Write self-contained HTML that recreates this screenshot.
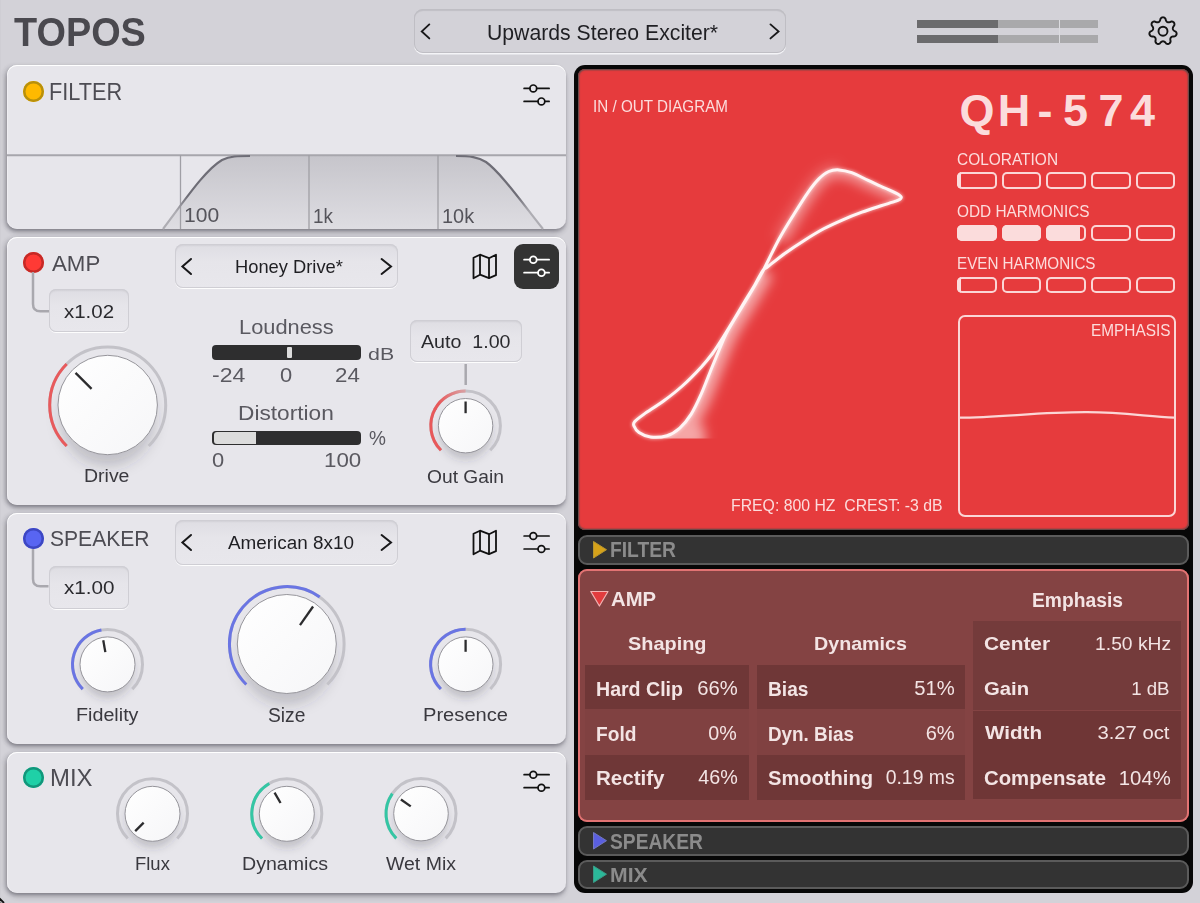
<!DOCTYPE html>
<html><head><meta charset='utf-8'><style>
*{margin:0;padding:0;box-sizing:border-box}
html,body{width:1200px;height:903px;overflow:hidden;background:#d3d2d8;font-family:"Liberation Sans",sans-serif}
.a{position:absolute}
.t{position:absolute;white-space:pre;line-height:1;font-family:"Liberation Sans",sans-serif}
.panel{position:absolute;left:7px;width:559px;background:#e7e6eb;border-radius:10px;
 box-shadow:inset 0 1px 0 #ffffff, inset 1px 0 0 #efeef2, 0 2px 3px rgba(40,38,50,0.22), 0 5px 4px rgba(40,38,50,0.16), -3px 1px 4px rgba(40,38,50,0.2)}
.dot{position:absolute;width:21px;height:21px;border-radius:50%}
.ibox{position:absolute;border-radius:7px;background:linear-gradient(#dedde3,#e6e5ea 40%,#e8e7ec);
 box-shadow:inset 0 0 0 1px #cfced4, inset 0 2px 2px rgba(0,0,0,0.06), 0 1px 0 rgba(255,255,255,0.9)}
.tab{position:absolute;left:578px;width:611px;background:#333333;border:2px solid #5b5b5b;border-radius:9px}
</style></head>
<body>
<div class='a' style='left:0;top:0;width:1px;height:903px;background:#cfced4'></div><svg class='a' style='left:0;top:893px' width='12' height='10'><path d='M-0.5,5.5 L4,10' stroke='#111' stroke-width='1.8'/><path d='M0,8 L2,10 L0,10Z' fill='#888'/></svg><div class='a' style='left:414px;top:9px;width:372px;height:44px;border-radius:9px;background:#d3d2d8;box-shadow:inset 0 0 0 1px #bfbec4, inset 0 2px 1px rgba(0,0,0,0.09), 0 1.5px 0 #f4f4f7'></div><div class='a' style='left:917px;top:20px;width:81px;height:8px;background:#6b6b6d'></div><div class='a' style='left:998px;top:20px;width:61px;height:8px;background:#a9a9ab'></div><div class='a' style='left:1060px;top:20px;width:38px;height:8px;background:#a9a9ab'></div><div class='a' style='left:917px;top:35px;width:81px;height:8px;background:#6b6b6d'></div><div class='a' style='left:998px;top:35px;width:61px;height:8px;background:#a9a9ab'></div><div class='a' style='left:1060px;top:35px;width:38px;height:8px;background:#a9a9ab'></div><div class='panel' style='top:65px;height:164px'></div><div class='panel' style='top:237px;height:268px'></div><div class='panel' style='top:513px;height:231px'></div><div class='panel' style='top:752px;height:141px'></div><div class='dot' style='left:22.5px;top:80.5px;background:#ffb900;box-shadow:inset 0 0 0 2.5px #b8900c'></div><div class='dot' style='left:22.5px;top:251.5px;background:#ff3a35;box-shadow:inset 0 0 0 2.5px #c52a26'></div><div class='dot' style='left:22.5px;top:528.0px;background:#5865f2;box-shadow:inset 0 0 0 2.5px #3d47c2'></div><div class='dot' style='left:22.5px;top:766.5px;background:#1fd0a7;box-shadow:inset 0 0 0 2.5px #13967b'></div><div class='ibox' style='left:49px;top:289px;width:80px;height:43px'></div><div class='ibox' style='left:48.5px;top:565.5px;width:80.5px;height:43px'></div><div class='ibox' style='left:410px;top:319.5px;width:111.5px;height:42.5px'></div><div class='ibox' style='left:175px;top:244px;width:223px;height:44px;border-radius:8px'></div><div class='ibox' style='left:175px;top:520px;width:223px;height:44.5px;border-radius:8px'></div><div class='a' style='left:514px;top:244px;width:45px;height:44.5px;border-radius:9px;background:#333333'></div><div class='a' style='left:212px;top:345px;width:149px;height:14.5px;border-radius:4px;background:#2e2e2f'></div><div class='a' style='left:286.7px;top:347px;width:5.8px;height:10.5px;border-radius:1px;background:#dcdcdc'></div><div class='a' style='left:212px;top:430.5px;width:149px;height:14.5px;border-radius:4px;background:#2e2e2f'></div><div class='a' style='left:213.5px;top:432px;width:42px;height:11.5px;border-radius:3px 0 0 3px;background:#dcdcdc'></div><div class='a' style='left:574px;top:65px;width:619px;height:828px;border-radius:11px;background:#070707'></div><div class='a' style='left:578px;top:69px;width:611px;height:461px;border-radius:7px;background:#e63b3d;box-shadow:inset 0 0 0 1px #6e4848, inset 0 0 1px 2px rgba(120,70,70,0.45)'></div><div class='a' style='left:957.0px;top:172.2px;width:39.6px;height:16.6px;border-radius:5px;box-shadow:inset 0 0 0 2px #fbd6d6;overflow:hidden'><div style='position:absolute;left:0;top:0;bottom:0;width:10%;background:#fbdcdc'></div></div><div class='a' style='left:1001.7px;top:172.2px;width:39.6px;height:16.6px;border-radius:5px;box-shadow:inset 0 0 0 2px #fbd6d6;overflow:hidden'></div><div class='a' style='left:1046.4px;top:172.2px;width:39.6px;height:16.6px;border-radius:5px;box-shadow:inset 0 0 0 2px #fbd6d6;overflow:hidden'></div><div class='a' style='left:1091.1px;top:172.2px;width:39.6px;height:16.6px;border-radius:5px;box-shadow:inset 0 0 0 2px #fbd6d6;overflow:hidden'></div><div class='a' style='left:1135.8px;top:172.2px;width:39.6px;height:16.6px;border-radius:5px;box-shadow:inset 0 0 0 2px #fbd6d6;overflow:hidden'></div><div class='a' style='left:957.0px;top:224.5px;width:39.6px;height:16.6px;border-radius:5px;box-shadow:inset 0 0 0 2px #fbd6d6;overflow:hidden'><div style='position:absolute;left:0;top:0;bottom:0;width:100%;background:#fbdcdc'></div></div><div class='a' style='left:1001.7px;top:224.5px;width:39.6px;height:16.6px;border-radius:5px;box-shadow:inset 0 0 0 2px #fbd6d6;overflow:hidden'><div style='position:absolute;left:0;top:0;bottom:0;width:100%;background:#fbdcdc'></div></div><div class='a' style='left:1046.4px;top:224.5px;width:39.6px;height:16.6px;border-radius:5px;box-shadow:inset 0 0 0 2px #fbd6d6;overflow:hidden'><div style='position:absolute;left:0;top:0;bottom:0;width:86%;background:#fbdcdc'></div></div><div class='a' style='left:1091.1px;top:224.5px;width:39.6px;height:16.6px;border-radius:5px;box-shadow:inset 0 0 0 2px #fbd6d6;overflow:hidden'></div><div class='a' style='left:1135.8px;top:224.5px;width:39.6px;height:16.6px;border-radius:5px;box-shadow:inset 0 0 0 2px #fbd6d6;overflow:hidden'></div><div class='a' style='left:957.0px;top:276.9px;width:39.6px;height:16.6px;border-radius:5px;box-shadow:inset 0 0 0 2px #fbd6d6;overflow:hidden'><div style='position:absolute;left:0;top:0;bottom:0;width:10%;background:#fbdcdc'></div></div><div class='a' style='left:1001.7px;top:276.9px;width:39.6px;height:16.6px;border-radius:5px;box-shadow:inset 0 0 0 2px #fbd6d6;overflow:hidden'></div><div class='a' style='left:1046.4px;top:276.9px;width:39.6px;height:16.6px;border-radius:5px;box-shadow:inset 0 0 0 2px #fbd6d6;overflow:hidden'></div><div class='a' style='left:1091.1px;top:276.9px;width:39.6px;height:16.6px;border-radius:5px;box-shadow:inset 0 0 0 2px #fbd6d6;overflow:hidden'></div><div class='a' style='left:1135.8px;top:276.9px;width:39.6px;height:16.6px;border-radius:5px;box-shadow:inset 0 0 0 2px #fbd6d6;overflow:hidden'></div><div class='a' style='left:957.5px;top:314.5px;width:218px;height:202.5px;border-radius:7px;border:2px solid #fbd6d6'></div><div class='tab' style='top:535px;height:30px'></div><div class='a' style='left:578px;top:569px;width:611px;height:253px;border-radius:9px;background:#844343;box-shadow:inset 0 0 0 2px #e27373'></div><div class='tab' style='top:826px;height:30px'></div><div class='tab' style='top:859.5px;height:29.5px'></div><div class='a' style='left:585.4px;top:665.2px;width:163.4px;height:44.2px;background:#6f3737'></div><div class='a' style='left:585.4px;top:755px;width:163.4px;height:44.8px;background:#6f3737'></div><div class='a' style='left:757.4px;top:665.2px;width:207.6px;height:44.2px;background:#6f3737'></div><div class='a' style='left:757.4px;top:755px;width:207.6px;height:44.8px;background:#6f3737'></div><div class='a' style='left:585.4px;top:709.4px;width:163.4px;height:45.6px;background:#804141'></div><div class='a' style='left:757.4px;top:709.4px;width:207.6px;height:45.6px;background:#804141'></div><div class='a' style='left:973.2px;top:621.3px;width:208.2px;height:89.2px;background:#743b3b'></div><div class='a' style='left:973.2px;top:710.5px;width:208.2px;height:88.5px;background:#6f3636'></div>
<svg class='a' style='left:0;top:0' width='1200' height='903' viewBox='0 0 1200 903'><defs>
<filter id='blurL' x='-50%' y='-50%' width='200%' height='200%'><feGaussianBlur stdDeviation='7'/></filter>
<filter id='blurS' x='-50%' y='-50%' width='200%' height='200%'><feGaussianBlur stdDeviation='4.5'/></filter>
<filter id='glow' filterUnits='userSpaceOnUse' x='578' y='69' width='611' height='460'><feGaussianBlur stdDeviation='6'/></filter><filter id='glowS' filterUnits='userSpaceOnUse' x='578' y='69' width='611' height='460'><feGaussianBlur stdDeviation='1.5'/></filter>
<linearGradient id='kb' x1='0' y1='0' x2='1' y2='1'><stop offset='0' stop-color='#ffffff'/><stop offset='1' stop-color='#f6f6f8'/></linearGradient>
<linearGradient id='og' gradientUnits='userSpaceOnUse' x1='440' y1='405' x2='466' y2='390'><stop offset='0' stop-color='#e8585a'/><stop offset='1' stop-color='#d9a3a6'/></linearGradient>
<linearGradient id='fg' x1='0' y1='0' x2='0' y2='1'><stop offset='0' stop-color='#c6c5cb'/><stop offset='1' stop-color='#dedde2'/></linearGradient><linearGradient id='fs' gradientUnits='userSpaceOnUse' x1='0' y1='196' x2='0' y2='212'><stop offset='0' stop-color='#6e6d76'/><stop offset='1' stop-color='#aeadb3'/></linearGradient>
</defs>
<path d='M429.3,24.4 L421.8,31.4 L429.3,38.4' fill='none' stroke='#18181a' stroke-width='1.9' stroke-linecap='round' stroke-linejoin='miter'/>
<path d='M770.5,24.4 L778.5,31.4 L770.5,38.4' fill='none' stroke='#18181a' stroke-width='1.9' stroke-linecap='round' stroke-linejoin='miter'/>
<path d='M1163.00,17.30 L1163.42,17.33 L1163.82,17.43 L1164.22,17.60 L1164.61,17.83 L1164.97,18.14 L1165.30,18.52 L1165.59,19.03 L1165.74,19.97 L1165.96,20.49 L1166.18,20.89 L1166.41,21.23 L1166.63,21.52 L1166.87,21.75 L1167.12,21.95 L1167.38,22.10 L1167.66,22.21 L1167.97,22.28 L1168.31,22.32 L1168.67,22.32 L1169.08,22.29 L1169.53,22.21 L1170.07,22.05 L1170.90,21.59 L1171.48,21.50 L1171.99,21.52 L1172.45,21.61 L1172.87,21.76 L1173.25,21.97 L1173.58,22.23 L1173.87,22.53 L1174.10,22.88 L1174.28,23.26 L1174.40,23.68 L1174.45,24.12 L1174.44,24.59 L1174.35,25.09 L1174.12,25.64 L1173.49,26.34 L1173.22,26.83 L1173.04,27.26 L1172.92,27.65 L1172.84,28.00 L1172.80,28.34 L1172.80,28.65 L1172.85,28.95 L1172.94,29.24 L1173.07,29.53 L1173.25,29.81 L1173.48,30.10 L1173.76,30.39 L1174.10,30.70 L1174.56,31.03 L1175.44,31.39 L1175.87,31.78 L1176.17,32.19 L1176.39,32.61 L1176.53,33.03 L1176.61,33.46 L1176.61,33.88 L1176.55,34.29 L1176.43,34.69 L1176.24,35.07 L1175.99,35.42 L1175.67,35.74 L1175.30,36.03 L1174.85,36.26 L1174.29,36.43 L1173.34,36.37 L1172.79,36.47 L1172.34,36.59 L1171.96,36.74 L1171.63,36.90 L1171.35,37.08 L1171.10,37.27 L1170.90,37.50 L1170.73,37.75 L1170.59,38.03 L1170.48,38.35 L1170.39,38.71 L1170.34,39.11 L1170.31,39.57 L1170.34,40.13 L1170.61,41.04 L1170.57,41.62 L1170.44,42.12 L1170.25,42.55 L1170.00,42.92 L1169.72,43.25 L1169.39,43.51 L1169.03,43.72 L1168.64,43.87 L1168.23,43.96 L1167.80,43.98 L1167.35,43.94 L1166.89,43.82 L1166.43,43.62 L1165.95,43.28 L1165.40,42.51 L1164.98,42.14 L1164.61,41.87 L1164.26,41.66 L1163.93,41.50 L1163.61,41.39 L1163.30,41.32 L1163.00,41.30 L1162.70,41.32 L1162.39,41.39 L1162.07,41.50 L1161.74,41.66 L1161.39,41.87 L1161.02,42.14 L1160.60,42.51 L1160.05,43.28 L1159.57,43.62 L1159.11,43.82 L1158.65,43.94 L1158.20,43.98 L1157.77,43.96 L1157.36,43.87 L1156.97,43.72 L1156.61,43.51 L1156.28,43.25 L1156.00,42.92 L1155.75,42.55 L1155.56,42.12 L1155.43,41.62 L1155.39,41.04 L1155.66,40.13 L1155.69,39.57 L1155.66,39.11 L1155.61,38.71 L1155.52,38.35 L1155.41,38.03 L1155.27,37.75 L1155.10,37.50 L1154.90,37.27 L1154.65,37.08 L1154.37,36.90 L1154.04,36.74 L1153.66,36.59 L1153.21,36.47 L1152.66,36.37 L1151.71,36.43 L1151.15,36.26 L1150.70,36.03 L1150.33,35.74 L1150.01,35.42 L1149.76,35.07 L1149.57,34.69 L1149.45,34.29 L1149.39,33.88 L1149.39,33.46 L1149.47,33.03 L1149.61,32.61 L1149.83,32.19 L1150.13,31.78 L1150.56,31.39 L1151.44,31.03 L1151.90,30.70 L1152.24,30.39 L1152.52,30.10 L1152.75,29.81 L1152.93,29.53 L1153.06,29.24 L1153.15,28.95 L1153.20,28.65 L1153.20,28.34 L1153.16,28.00 L1153.08,27.65 L1152.96,27.26 L1152.78,26.83 L1152.51,26.34 L1151.88,25.64 L1151.65,25.09 L1151.56,24.59 L1151.55,24.12 L1151.60,23.68 L1151.72,23.26 L1151.90,22.88 L1152.13,22.53 L1152.42,22.23 L1152.75,21.97 L1153.13,21.76 L1153.55,21.61 L1154.01,21.52 L1154.52,21.50 L1155.10,21.59 L1155.93,22.05 L1156.47,22.21 L1156.92,22.29 L1157.33,22.32 L1157.69,22.32 L1158.03,22.28 L1158.34,22.21 L1158.62,22.10 L1158.88,21.95 L1159.13,21.75 L1159.37,21.52 L1159.59,21.23 L1159.82,20.89 L1160.04,20.49 L1160.26,19.97 L1160.41,19.03 L1160.70,18.52 L1161.03,18.14 L1161.39,17.83 L1161.78,17.60 L1162.18,17.43 L1162.58,17.33 Z' fill='none' stroke='#141414' stroke-width='1.9' stroke-linejoin='round'/><circle cx='1163' cy='31.2' r='4.5' fill='none' stroke='#141414' stroke-width='1.9'/>
<line x1='1059.5' y1='20' x2='1059.5' y2='43' stroke='#dcdce0' stroke-width='1'/>
<path d='M163,229 C185,200 205,170 222,160 C230,156 238,156 250,156 L456,156 C470,156 478,157 486,162 C500,172 520,200 543,229 Z' fill='url(#fg)'/>
<line x1='7' y1='155.3' x2='566' y2='155.3' stroke='#a7a6ac' stroke-width='2'/>
<line x1='180.5' y1='155' x2='180.5' y2='229' stroke='#a09fa5' stroke-width='1.3'/>
<line x1='309' y1='155' x2='309' y2='229' stroke='#a09fa5' stroke-width='1.3'/>
<line x1='438' y1='155' x2='438' y2='229' stroke='#a09fa5' stroke-width='1.3'/>
<path d='M163,229 C185,200 205,170 222,160 C230,156 238,156 250,156' fill='none' stroke='url(#fs)' stroke-width='2.2'/>
<path d='M456,156 C470,156 478,157 486,162 C500,172 520,200 543,229' fill='none' stroke='url(#fs)' stroke-width='2.2'/>
<path d='M33,272 V304 Q33,311.3 40.3,311.3 H49' fill='none' stroke='#a9a8ae' stroke-width='2.5'/>
<path d='M33,549 V579 Q33,586.3 40.3,586.3 H48.5' fill='none' stroke='#a9a8ae' stroke-width='2.5'/>
<line x1='465.7' y1='364' x2='465.7' y2='385' stroke='#a9a8ae' stroke-width='2.5'/>
<g stroke='#111' stroke-width='1.7' fill='none' stroke-linecap='round'><line x1='524.1' y1='88.4' x2='529.90' y2='88.4'/><circle cx='533.30' cy='88.4' r='3.4'/><line x1='536.70' y1='88.4' x2='549.1' y2='88.4'/><line x1='524.1' y1='101.4' x2='538.00' y2='101.4'/><circle cx='541.40' cy='101.4' r='3.4'/><line x1='544.80' y1='101.4' x2='549.1' y2='101.4'/></g>
<g stroke='#111' stroke-width='1.8' fill='none' stroke-linejoin='round'><path d='M473.5,257.7 L480.0,254.7 L489.0,258.2 L496.0,254.7 L496.0,275.2 L489.0,278.2 L480.0,274.7 L473.5,278.2 Z'/><line x1='480.0' y1='254.7' x2='480.0' y2='274.7'/><line x1='489.0' y1='258.2' x2='489.0' y2='278.2'/></g>
<g stroke='#ffffff' stroke-width='1.8' fill='none' stroke-linecap='round'><line x1='524.1' y1='259.7' x2='529.90' y2='259.7'/><circle cx='533.30' cy='259.7' r='3.4'/><line x1='536.70' y1='259.7' x2='549.1' y2='259.7'/><line x1='524.1' y1='272.7' x2='538.00' y2='272.7'/><circle cx='541.40' cy='272.7' r='3.4'/><line x1='544.80' y1='272.7' x2='549.1' y2='272.7'/></g>
<path d='M191,259.0 L182.4,266.5 L191,274.0' fill='none' stroke='#18181a' stroke-width='2.0' stroke-linecap='round' stroke-linejoin='miter'/>
<path d='M381.6,259.0 L391,266.5 L381.6,274.0' fill='none' stroke='#18181a' stroke-width='2.0' stroke-linecap='round' stroke-linejoin='miter'/>
<g stroke='#111' stroke-width='1.8' fill='none' stroke-linejoin='round'><path d='M473.5,533.7 L480.0,530.7 L489.0,534.2 L496.0,530.7 L496.0,551.2 L489.0,554.2 L480.0,550.7 L473.5,554.2 Z'/><line x1='480.0' y1='530.7' x2='480.0' y2='550.7'/><line x1='489.0' y1='534.2' x2='489.0' y2='554.2'/></g>
<g stroke='#111' stroke-width='1.7' fill='none' stroke-linecap='round'><line x1='524.1' y1='536' x2='529.90' y2='536'/><circle cx='533.30' cy='536' r='3.4'/><line x1='536.70' y1='536' x2='549.1' y2='536'/><line x1='524.1' y1='549' x2='538.00' y2='549'/><circle cx='541.40' cy='549' r='3.4'/><line x1='544.80' y1='549' x2='549.1' y2='549'/></g>
<path d='M191,535.0 L182.4,542.5 L191,550.0' fill='none' stroke='#18181a' stroke-width='2.0' stroke-linecap='round' stroke-linejoin='miter'/>
<path d='M381.6,535.0 L391,542.5 L381.6,550.0' fill='none' stroke='#18181a' stroke-width='2.0' stroke-linecap='round' stroke-linejoin='miter'/>
<g stroke='#111' stroke-width='1.7' fill='none' stroke-linecap='round'><line x1='524.1' y1='774.7' x2='529.90' y2='774.7'/><circle cx='533.30' cy='774.7' r='3.4'/><line x1='536.70' y1='774.7' x2='549.1' y2='774.7'/><line x1='524.1' y1='787.7' x2='538.00' y2='787.7'/><circle cx='541.40' cy='787.7' r='3.4'/><line x1='544.80' y1='787.7' x2='549.1' y2='787.7'/></g>
<ellipse cx='107.7' cy='418.92' rx='47.22' ry='47.22' fill='rgba(60,58,70,0.22)' filter='url(#blurL)'/>
<path d='M66.69,446.01 A58,58 0 1 1 148.71,446.01' fill='none' stroke='#c3c2c8' stroke-width='3.0'/>
<path d='M66.69,446.01 A58,58 0 0 1 66.69,363.99' fill='none' stroke='#e85a5c' stroke-width='3.0'/>
<circle cx='107.7' cy='405' r='49.7' fill='url(#kb)' stroke='#96959b' stroke-width='1'/>
<line x1='91.58' y1='388.88' x2='75.53' y2='372.83' stroke='#2c2c2e' stroke-width='2.3'/>
<ellipse cx='465.6' cy='433.32' rx='25.84' ry='25.84' fill='rgba(60,58,70,0.22)' filter='url(#blurS)'/>
<path d='M440.99,450.31 A34.8,34.8 0 1 1 490.21,450.31' fill='none' stroke='#c3c2c8' stroke-width='3.0'/>
<path d='M440.99,450.31 A34.8,34.8 0 0 1 435.46,408.30' fill='none' stroke='#e8585a' stroke-width='3.0'/>
<path d='M434.87,409.36 A34.8,34.8 0 0 1 465.60,390.90' fill='none' stroke='url(#og)' stroke-width='3.0'/>
<circle cx='465.6' cy='425.7' r='27.2' fill='url(#kb)' stroke='#96959b' stroke-width='1'/>
<line x1='465.60' y1='413.20' x2='465.60' y2='401.50' stroke='#2c2c2e' stroke-width='2.3'/>
<ellipse cx='107.5' cy='672.10' rx='26.12' ry='26.12' fill='rgba(60,58,70,0.22)' filter='url(#blurS)'/>
<path d='M82.75,689.15 A35,35 0 1 1 132.25,689.15' fill='none' stroke='#c3c2c8' stroke-width='3.0'/>
<path d='M82.75,689.15 A35,35 0 0 1 101.42,629.93' fill='none' stroke='#6a75e3' stroke-width='3.0'/>
<circle cx='107.5' cy='664.4' r='27.5' fill='url(#kb)' stroke='#96959b' stroke-width='1'/>
<line x1='105.33' y1='652.09' x2='103.25' y2='640.27' stroke='#2c2c2e' stroke-width='2.3'/>
<ellipse cx='286.8' cy='657.86' rx='47.02' ry='47.02' fill='rgba(60,58,70,0.22)' filter='url(#blurL)'/>
<path d='M246.28,684.52 A57.3,57.3 0 1 1 327.32,684.52' fill='none' stroke='#c3c2c8' stroke-width='3.0'/>
<path d='M246.28,684.52 A57.3,57.3 0 0 1 319.67,597.06' fill='none' stroke='#6a75e3' stroke-width='3.0'/>
<circle cx='286.8' cy='644' r='49.5' fill='url(#kb)' stroke='#96959b' stroke-width='1'/>
<line x1='299.99' y1='625.16' x2='313.07' y2='606.48' stroke='#2c2c2e' stroke-width='2.3'/>
<ellipse cx='465.6' cy='671.97' rx='26.03' ry='26.03' fill='rgba(60,58,70,0.22)' filter='url(#blurS)'/>
<path d='M440.85,689.05 A35,35 0 1 1 490.35,689.05' fill='none' stroke='#c3c2c8' stroke-width='3.0'/>
<path d='M440.85,689.05 A35,35 0 0 1 465.60,629.30' fill='none' stroke='#6a75e3' stroke-width='3.0'/>
<circle cx='465.6' cy='664.3' r='27.4' fill='url(#kb)' stroke='#96959b' stroke-width='1'/>
<line x1='465.60' y1='651.80' x2='465.60' y2='639.80' stroke='#2c2c2e' stroke-width='2.3'/>
<ellipse cx='152.5' cy='821.50' rx='26.12' ry='26.12' fill='rgba(60,58,70,0.22)' filter='url(#blurS)'/>
<path d='M127.75,838.55 A35,35 0 1 1 177.25,838.55' fill='none' stroke='#c3c2c8' stroke-width='3.0'/>
<circle cx='152.5' cy='813.8' r='27.5' fill='url(#kb)' stroke='#96959b' stroke-width='1'/>
<line x1='143.66' y1='822.64' x2='135.18' y2='831.12' stroke='#2c2c2e' stroke-width='2.3'/>
<ellipse cx='286.8' cy='821.50' rx='26.12' ry='26.12' fill='rgba(60,58,70,0.22)' filter='url(#blurS)'/>
<path d='M262.05,838.55 A35,35 0 1 1 311.55,838.55' fill='none' stroke='#c3c2c8' stroke-width='3.0'/>
<path d='M262.05,838.55 A35,35 0 0 1 269.30,783.49' fill='none' stroke='#34c6a4' stroke-width='3.0'/>
<circle cx='286.8' cy='813.8' r='27.5' fill='url(#kb)' stroke='#96959b' stroke-width='1'/>
<line x1='280.55' y1='802.97' x2='274.55' y2='792.58' stroke='#2c2c2e' stroke-width='2.3'/>
<ellipse cx='421' cy='821.24' rx='25.93' ry='25.93' fill='rgba(60,58,70,0.22)' filter='url(#blurS)'/>
<path d='M396.25,838.35 A35,35 0 1 1 445.75,838.35' fill='none' stroke='#c3c2c8' stroke-width='3.0'/>
<path d='M396.25,838.35 A35,35 0 0 1 392.33,793.52' fill='none' stroke='#34c6a4' stroke-width='3.0'/>
<circle cx='421' cy='813.6' r='27.3' fill='url(#kb)' stroke='#96959b' stroke-width='1'/>
<line x1='410.76' y1='806.43' x2='400.93' y2='799.55' stroke='#2c2c2e' stroke-width='2.3'/>
<clipPath id='c1'><polygon points='779.1,239.0 763.5,270.0 756.0,283.5 746.5,299.5 735.5,317.5 726.0,334.0 719.3,349.5 711.6,368.2 701.4,393.7 691.2,414.1 679.8,428.1 667.0,435.7 650.5,437.0 650.5,438.5 800.0,438.5 840.0,239.0'/></clipPath><clipPath id='c2'><polygon points='779.1,239.0 794.4,213.5 808.4,191.8 818.6,179.1 828.8,171.5 839.0,169.9 851.7,172.7 868.2,180.4 884.8,188.0 897.5,194.4 900.6,198.6 898.8,200.7 881.0,205.8 861.9,212.2 842.8,219.8 823.7,228.8 804.6,240.2 785.5,253.0 767.6,268.2 760.0,275.0'/></clipPath><clipPath id='c3'><polygon points='762.5,271.0 779.1,239.0 794.4,213.5 808.4,191.8 818.6,179.1 828.8,171.5 839.0,169.9 860.0,160.0 860.0,100.0 700.0,100.0 700.0,300.0'/></clipPath>
<g clip-path='url(#c1)'><path d='M763.50,270.00 C762.25,272.25 758.83,278.58 756.00,283.50 C753.17,288.42 749.92,293.83 746.50,299.50 C743.08,305.17 738.92,311.75 735.50,317.50 C732.08,323.25 728.70,328.67 726.00,334.00 C723.30,339.33 721.70,343.80 719.30,349.50 C716.90,355.20 714.58,360.83 711.60,368.20 C708.62,375.57 704.80,386.05 701.40,393.70 C698.00,401.35 694.80,408.37 691.20,414.10 C687.60,419.83 683.83,424.50 679.80,428.10 C675.77,431.70 671.88,434.22 667.00,435.70 C662.12,437.18 648.33,436.70 650.50,437.00 C652.67,437.30 670.92,437.67 680.00,437.50 C689.08,437.33 700.83,436.25 705.00,436.00 ' fill='none' stroke='rgba(255,236,236,0.6)' stroke-width='22' filter='url(#glow)'/></g>
<g clip-path='url(#c2)'><path d='M779.10,239.00 C781.65,234.75 789.52,221.37 794.40,213.50 C799.28,205.63 804.37,197.53 808.40,191.80 C812.43,186.07 815.20,182.48 818.60,179.10 C822.00,175.72 825.40,173.03 828.80,171.50 C832.20,169.97 835.18,169.70 839.00,169.90 C842.82,170.10 846.83,170.95 851.70,172.70 C856.57,174.45 862.68,177.85 868.20,180.40 C873.72,182.95 879.92,185.67 884.80,188.00 C889.68,190.33 894.87,192.63 897.50,194.40 C900.13,196.17 900.08,197.90 900.60,198.60 ' fill='none' stroke='rgba(255,236,236,0.5)' stroke-width='16' filter='url(#glow)'/></g>
<g clip-path='url(#c3)'><path d='M779.10,239.00 C781.65,234.75 789.52,221.37 794.40,213.50 C799.28,205.63 804.37,197.53 808.40,191.80 C812.43,186.07 815.20,182.48 818.60,179.10 C822.00,175.72 825.40,173.03 828.80,171.50 C832.20,169.97 837.30,170.17 839.00,169.90 ' fill='none' stroke='rgba(255,236,236,0.25)' stroke-width='12' filter='url(#glow)'/></g>
<path d='M634.60,421.70 C636.28,419.72 639.33,417.50 644.10,414.10 C648.87,410.70 656.83,405.98 663.20,401.30 C669.57,396.62 675.93,391.73 682.30,386.00 C688.67,380.27 696.37,372.32 701.40,366.90 C706.43,361.48 708.90,358.40 712.50,353.50 C716.10,348.60 719.42,343.17 723.00,337.50 C726.58,331.83 730.33,325.58 734.00,319.50 C737.67,313.42 741.58,306.67 745.00,301.00 C748.42,295.33 751.58,290.50 754.50,285.50 C757.42,280.50 760.25,274.17 762.50,271.00 C764.75,267.83 764.17,269.50 768.00,266.50 C771.83,263.50 779.40,257.38 785.50,253.00 C791.60,248.62 798.23,244.23 804.60,240.20 C810.97,236.17 817.33,232.20 823.70,228.80 C830.07,225.40 836.43,222.57 842.80,219.80 C849.17,217.03 855.53,214.53 861.90,212.20 C868.27,209.87 875.40,207.63 881.00,205.80 C886.60,203.97 892.23,202.40 895.50,201.20 C898.77,200.00 899.93,199.60 900.60,198.60 C901.27,197.60 902.13,196.97 899.50,195.20 C896.87,193.43 890.02,190.47 884.80,188.00 C879.58,185.53 873.72,182.95 868.20,180.40 C862.68,177.85 856.57,174.45 851.70,172.70 C846.83,170.95 842.82,170.10 839.00,169.90 C835.18,169.70 832.20,169.97 828.80,171.50 C825.40,173.03 822.00,175.72 818.60,179.10 C815.20,182.48 812.43,186.07 808.40,191.80 C804.37,197.53 799.28,205.63 794.40,213.50 C789.52,221.37 784.25,229.58 779.10,239.00 C773.95,248.42 767.35,262.58 763.50,270.00 C759.65,277.42 758.83,278.58 756.00,283.50 C753.17,288.42 749.92,293.83 746.50,299.50 C743.08,305.17 738.92,311.75 735.50,317.50 C732.08,323.25 728.70,328.67 726.00,334.00 C723.30,339.33 721.70,343.80 719.30,349.50 C716.90,355.20 714.58,360.83 711.60,368.20 C708.62,375.57 704.80,386.05 701.40,393.70 C698.00,401.35 694.80,408.37 691.20,414.10 C687.60,419.83 683.83,424.50 679.80,428.10 C675.77,431.70 671.88,434.22 667.00,435.70 C662.12,437.18 655.17,437.53 650.50,437.00 C645.83,436.47 641.75,434.33 639.00,432.50 C636.25,430.67 634.73,427.80 634.00,426.00 C633.27,424.20 632.92,423.68 634.60,421.70 Z' fill='none' stroke='rgba(255,250,250,0.45)' stroke-width='5' filter='url(#glowS)'/>
<path d='M634.60,421.70 C636.28,419.72 639.33,417.50 644.10,414.10 C648.87,410.70 656.83,405.98 663.20,401.30 C669.57,396.62 675.93,391.73 682.30,386.00 C688.67,380.27 696.37,372.32 701.40,366.90 C706.43,361.48 708.90,358.40 712.50,353.50 C716.10,348.60 719.42,343.17 723.00,337.50 C726.58,331.83 730.33,325.58 734.00,319.50 C737.67,313.42 741.58,306.67 745.00,301.00 C748.42,295.33 751.58,290.50 754.50,285.50 C757.42,280.50 760.25,274.17 762.50,271.00 C764.75,267.83 764.17,269.50 768.00,266.50 C771.83,263.50 779.40,257.38 785.50,253.00 C791.60,248.62 798.23,244.23 804.60,240.20 C810.97,236.17 817.33,232.20 823.70,228.80 C830.07,225.40 836.43,222.57 842.80,219.80 C849.17,217.03 855.53,214.53 861.90,212.20 C868.27,209.87 875.40,207.63 881.00,205.80 C886.60,203.97 892.23,202.40 895.50,201.20 C898.77,200.00 899.93,199.60 900.60,198.60 C901.27,197.60 902.13,196.97 899.50,195.20 C896.87,193.43 890.02,190.47 884.80,188.00 C879.58,185.53 873.72,182.95 868.20,180.40 C862.68,177.85 856.57,174.45 851.70,172.70 C846.83,170.95 842.82,170.10 839.00,169.90 C835.18,169.70 832.20,169.97 828.80,171.50 C825.40,173.03 822.00,175.72 818.60,179.10 C815.20,182.48 812.43,186.07 808.40,191.80 C804.37,197.53 799.28,205.63 794.40,213.50 C789.52,221.37 784.25,229.58 779.10,239.00 C773.95,248.42 767.35,262.58 763.50,270.00 C759.65,277.42 758.83,278.58 756.00,283.50 C753.17,288.42 749.92,293.83 746.50,299.50 C743.08,305.17 738.92,311.75 735.50,317.50 C732.08,323.25 728.70,328.67 726.00,334.00 C723.30,339.33 721.70,343.80 719.30,349.50 C716.90,355.20 714.58,360.83 711.60,368.20 C708.62,375.57 704.80,386.05 701.40,393.70 C698.00,401.35 694.80,408.37 691.20,414.10 C687.60,419.83 683.83,424.50 679.80,428.10 C675.77,431.70 671.88,434.22 667.00,435.70 C662.12,437.18 655.17,437.53 650.50,437.00 C645.83,436.47 641.75,434.33 639.00,432.50 C636.25,430.67 634.73,427.80 634.00,426.00 C633.27,424.20 632.92,423.68 634.60,421.70 Z' fill='none' stroke='#fff4f4' stroke-width='3' stroke-linejoin='round'/>
<path d='M959,417.6 C1000,417.5 1040,412 1087,412.2 C1125,412.4 1150,417 1174,417.6' fill='none' stroke='#fbd6d6' stroke-width='2.2'/>
<path d='M593.5,541.5 L606.5,549.7 L593.5,558 Z' fill='#d6a21a' stroke='#b8952e' stroke-width='1'/>
<path d='M590.8,591.5 L608,591.5 L599.4,606 Z' fill='#e23c3e' stroke='#f3b3b3' stroke-width='1.2' stroke-linejoin='round'/>
<path d='M593.5,832.5 L606.5,840.7 L593.5,849 Z' fill='#5a5fe0' stroke='#7378c0' stroke-width='1'/>
<path d='M593.5,866 L606.5,874.2 L593.5,882.5 Z' fill='#2bb899' stroke='#3a9a86' stroke-width='1'/></svg>
<div class='t' style='left:927.0px;width:100px;text-align:center;top:87.8px;font-size:45px;font-weight:700;color:#fbdcdc'>Q</div><div class='t' style='left:964.0px;width:100px;text-align:center;top:87.8px;font-size:45px;font-weight:700;color:#fbdcdc'>H</div><div class='t' style='left:995.0px;width:100px;text-align:center;top:87.8px;font-size:45px;font-weight:700;color:#fbdcdc'>-</div><div class='t' style='left:1025.5px;width:100px;text-align:center;top:87.8px;font-size:45px;font-weight:700;color:#fbdcdc'>5</div><div class='t' style='left:1061.0px;width:100px;text-align:center;top:87.8px;font-size:45px;font-weight:700;color:#fbdcdc'>7</div><div class='t' style='left:1092.5px;width:100px;text-align:center;top:87.8px;font-size:45px;font-weight:700;color:#fbdcdc'>4</div>
<div class='t' style='left:14.47px;transform-origin:0 0;top:11.51px;font-size:40.58px;font-weight:700;color:#4a494f;transform:scaleX(0.9330);'>TOPOS</div>
<div class='t' style='left:486.64px;transform-origin:0 0;top:21.96px;font-size:22.1px;font-weight:400;color:#1f1f23;transform:scaleX(0.9603);'>Upwards Stereo Exciter*</div>
<div class='t' style='left:49.29px;transform-origin:0 0;top:80.43px;font-size:24.2px;font-weight:400;color:#4d4c53;transform:scaleX(0.8977);'>FILTER</div>
<div class='t' style='left:184.02px;transform-origin:0 0;top:206.37px;font-size:19.57px;font-weight:400;color:#55545b;transform:scaleX(1.0776);'>100</div>
<div class='t' style='left:313.02px;transform-origin:0 0;top:207.37px;font-size:19.57px;font-weight:400;color:#55545b;transform:scaleX(0.9648);'>1k</div>
<div class='t' style='left:442.02px;transform-origin:0 0;top:207.37px;font-size:19.57px;font-weight:400;color:#55545b;transform:scaleX(1.0173);'>10k</div>
<div class='t' style='left:51.89px;transform-origin:0 0;top:253.05px;font-size:22.17px;font-weight:400;color:#4d4c53;transform:scaleX(1.0047);'>AMP</div>
<div class='t' style='left:63.57px;transform-origin:0 0;top:302.63px;font-size:18.55px;font-weight:400;color:#2a2a2e;transform:scaleX(1.1040);'>x1.02</div>
<div class='t' style='left:235.06px;transform-origin:0 0;top:257.99px;font-size:18.84px;font-weight:400;color:#1f1f23;transform:scaleX(0.9722);'>Honey Drive*</div>
<div class='t' style='left:238.96px;transform-origin:0 0;top:316.68px;font-size:20.72px;font-weight:400;color:#5a5960;transform:scaleX(1.0538);'>Loudness</div>
<div class='t' style='left:368.13px;transform-origin:0 0;top:345.72px;font-size:17.39px;font-weight:400;color:#5a5960;transform:scaleX(1.2291);'>dB</div>
<div class='t' style='left:211.97px;transform-origin:0 0;top:365.21px;font-size:20.58px;font-weight:400;color:#5a5960;transform:scaleX(1.1206);'>-24</div>
<div class='t' style='left:280.47px;transform-origin:0 0;top:365.21px;font-size:20.58px;font-weight:400;color:#5a5960;transform:scaleX(1.0644);'>0</div>
<div class='t' style='left:335.47px;transform-origin:0 0;top:365.21px;font-size:20.58px;font-weight:400;color:#5a5960;transform:scaleX(1.0818);'>24</div>
<div class='t' style='left:237.99px;transform-origin:0 0;top:402.75px;font-size:20.29px;font-weight:400;color:#5a5960;transform:scaleX(1.1181);'>Distortion</div>
<div class='t' style='left:368.99px;transform-origin:0 0;top:427.75px;font-size:20.29px;font-weight:400;color:#5a5960;transform:scaleX(0.9380);'>%</div>
<div class='t' style='left:212.45px;transform-origin:0 0;top:448.64px;font-size:21.01px;font-weight:400;color:#5a5960;transform:scaleX(1.0431);'>0</div>
<div class='t' style='left:323.95px;transform-origin:0 0;top:448.64px;font-size:21.01px;font-weight:400;color:#5a5960;transform:scaleX(1.0627);'>100</div>
<div class='t' style='left:421.04px;transform-origin:0 0;top:331.74px;font-size:19.13px;font-weight:400;color:#2a2a2e;transform:scaleX(1.0269);'>Auto  1.00</div>
<div class='t' style='left:83.62px;transform-origin:0 0;top:468.47px;font-size:17.68px;font-weight:400;color:#3a393f;transform:scaleX(1.1020);'>Drive</div>
<div class='t' style='left:427.09px;transform-origin:0 0;top:468.08px;font-size:18.26px;font-weight:400;color:#3a393f;transform:scaleX(1.0532);'>Out Gain</div>
<div class='t' style='left:50.38px;transform-origin:0 0;top:528.43px;font-size:22.32px;font-weight:400;color:#4d4c53;transform:scaleX(0.9449);'>SPEAKER</div>
<div class='t' style='left:63.59px;transform-origin:0 0;top:579.08px;font-size:18.26px;font-weight:400;color:#2a2a2e;transform:scaleX(1.1326);'>x1.00</div>
<div class='t' style='left:227.58px;transform-origin:0 0;top:534.05px;font-size:18.41px;font-weight:400;color:#1f1f23;transform:scaleX(1.0253);'>American 8x10</div>
<div class='t' style='left:75.54px;transform-origin:0 0;top:704.62px;font-size:19.28px;font-weight:400;color:#3a393f;transform:scaleX(1.0238);'>Fidelity</div>
<div class='t' style='left:267.50px;transform-origin:0 0;top:704.80px;font-size:20.0px;font-weight:400;color:#3a393f;transform:scaleX(0.9623);'>Size</div>
<div class='t' style='left:423.07px;transform-origin:0 0;top:705.71px;font-size:18.7px;font-weight:400;color:#3a393f;transform:scaleX(1.0769);'>Presence</div>
<div class='t' style='left:50.31px;transform-origin:0 0;top:765.60px;font-size:23.77px;font-weight:400;color:#4d4c53;transform:scaleX(1.0055);'>MIX</div>
<div class='t' style='left:135.06px;transform-origin:0 0;top:854.99px;font-size:18.84px;font-weight:400;color:#3a393f;transform:scaleX(0.9799);'>Flux</div>
<div class='t' style='left:242.06px;transform-origin:0 0;top:854.99px;font-size:18.84px;font-weight:400;color:#3a393f;transform:scaleX(1.0401);'>Dynamics</div>
<div class='t' style='left:386.04px;transform-origin:0 0;top:853.62px;font-size:19.28px;font-weight:400;color:#3a393f;transform:scaleX(1.0110);'>Wet Mix</div>
<div class='t' style='left:592.66px;transform-origin:0 0;top:99.31px;font-size:16.81px;font-weight:400;color:#fcdcdc;transform:scaleX(0.9061);'>IN / OUT DIAGRAM</div>
<div class='t' style='left:957.17px;transform-origin:0 0;top:152.03px;font-size:16.67px;font-weight:400;color:#fcdcdc;transform:scaleX(0.9279);'>COLORATION</div>
<div class='t' style='left:957.17px;transform-origin:0 0;top:204.13px;font-size:16.67px;font-weight:400;color:#fcdcdc;transform:scaleX(0.9240);'>ODD HARMONICS</div>
<div class='t' style='left:957.17px;transform-origin:0 0;top:256.33px;font-size:16.67px;font-weight:400;color:#fcdcdc;transform:scaleX(0.9126);'>EVEN HARMONICS</div>
<div class='t' style='right:29.18px;transform-origin:100% 0;top:321.78px;font-size:16.38px;font-weight:400;color:#fcdcdc;transform:scaleX(0.9409);'>EMPHASIS</div>
<div class='t' style='left:731.13px;transform-origin:0 0;top:497.22px;font-size:17.39px;font-weight:400;color:#fcdcdc;transform:scaleX(0.9092);'>FREQ: 800 HZ  CREST: -3 dB</div>
<div class='t' style='left:610.43px;transform-origin:0 0;top:540.08px;font-size:21.38px;font-weight:700;color:#8b8b8b;transform:scaleX(0.9005);'>FILTER</div>
<div class='t' style='left:610.44px;transform-origin:0 0;top:831.11px;font-size:21.16px;font-weight:700;color:#8b8b8b;transform:scaleX(0.9086);'>SPEAKER</div>
<div class='t' style='left:610.46px;transform-origin:0 0;top:865.16px;font-size:20.87px;font-weight:700;color:#8b8b8b;transform:scaleX(1.0146);'>MIX</div>
<div class='t' style='left:611.48px;transform-origin:0 0;top:588.63px;font-size:20.43px;font-weight:700;color:#f3e4e4;transform:scaleX(0.9920);'>AMP</div>
<div class='t' style='left:1032.00px;transform-origin:0 0;top:589.50px;font-size:20.0px;font-weight:700;color:#f3e4e4;transform:scaleX(0.9624);'>Emphasis</div>
<div class='t' style='left:627.54px;transform-origin:0 0;top:633.74px;font-size:19.13px;font-weight:700;color:#f3e4e4;transform:scaleX(1.0414);'>Shaping</div>
<div class='t' style='left:814.04px;transform-origin:0 0;top:633.74px;font-size:19.13px;font-weight:700;color:#f3e4e4;transform:scaleX(1.0297);'>Dynamics</div>
<div class='t' style='left:595.51px;transform-origin:0 0;top:679.82px;font-size:19.86px;font-weight:700;color:#f3e4e4;transform:scaleX(0.9850);'>Hard Clip</div>
<div class='t' style='right:462.01px;transform-origin:100% 0;top:678.82px;font-size:19.86px;font-weight:400;color:#f3e4e4;transform:scaleX(1.0196);'>66%</div>
<div class='t' style='left:595.51px;transform-origin:0 0;top:725.42px;font-size:19.86px;font-weight:700;color:#f3e4e4;transform:scaleX(0.9643);'>Fold</div>
<div class='t' style='right:463.01px;transform-origin:100% 0;top:724.42px;font-size:19.86px;font-weight:400;color:#f3e4e4;transform:scaleX(0.9924);'>0%</div>
<div class='t' style='left:595.51px;transform-origin:0 0;top:769.22px;font-size:19.86px;font-weight:700;color:#f3e4e4;transform:scaleX(1.0353);'>Rectify</div>
<div class='t' style='right:462.01px;transform-origin:100% 0;top:768.22px;font-size:19.86px;font-weight:400;color:#f3e4e4;transform:scaleX(0.9937);'>46%</div>
<div class='t' style='left:767.51px;transform-origin:0 0;top:679.82px;font-size:19.86px;font-weight:700;color:#f3e4e4;transform:scaleX(0.9636);'>Bias</div>
<div class='t' style='right:245.51px;transform-origin:100% 0;top:678.82px;font-size:19.86px;font-weight:400;color:#f3e4e4;transform:scaleX(1.0196);'>51%</div>
<div class='t' style='left:767.51px;transform-origin:0 0;top:725.42px;font-size:19.86px;font-weight:700;color:#f3e4e4;transform:scaleX(0.9489);'>Dyn. Bias</div>
<div class='t' style='right:245.51px;transform-origin:100% 0;top:724.42px;font-size:19.86px;font-weight:400;color:#f3e4e4;transform:scaleX(1.0114);'>6%</div>
<div class='t' style='left:767.51px;transform-origin:0 0;top:769.22px;font-size:19.86px;font-weight:700;color:#f3e4e4;transform:scaleX(1.0126);'>Smoothing</div>
<div class='t' style='right:245.51px;transform-origin:100% 0;top:768.22px;font-size:19.86px;font-weight:400;color:#f3e4e4;transform:scaleX(0.9759);'>0.19 ms</div>
<div class='t' style='left:983.59px;transform-origin:0 0;top:635.18px;font-size:18.26px;font-weight:700;color:#f3e4e4;transform:scaleX(1.1435);'>Center</div>
<div class='t' style='right:29.09px;transform-origin:100% 0;top:635.18px;font-size:18.26px;font-weight:400;color:#f3e4e4;transform:scaleX(1.0543);'>1.50 kHz</div>
<div class='t' style='left:983.59px;transform-origin:0 0;top:680.38px;font-size:18.26px;font-weight:700;color:#f3e4e4;transform:scaleX(1.1100);'>Gain</div>
<div class='t' style='right:30.09px;transform-origin:100% 0;top:680.38px;font-size:18.26px;font-weight:400;color:#f3e4e4;transform:scaleX(1.0225);'>1 dB</div>
<div class='t' style='left:984.59px;transform-origin:0 0;top:723.60px;font-size:18.12px;font-weight:700;color:#f3e4e4;transform:scaleX(1.1388);'>Width</div>
<div class='t' style='right:30.09px;transform-origin:100% 0;top:723.60px;font-size:18.12px;font-weight:400;color:#f3e4e4;transform:scaleX(1.1181);'>3.27 oct</div>
<div class='t' style='left:983.51px;transform-origin:0 0;top:769.42px;font-size:19.86px;font-weight:700;color:#f3e4e4;transform:scaleX(1.0239);'>Compensate</div>
<div class='t' style='right:29.01px;transform-origin:100% 0;top:769.42px;font-size:19.86px;font-weight:400;color:#f3e4e4;transform:scaleX(1.0246);'>104%</div>
</body></html>
